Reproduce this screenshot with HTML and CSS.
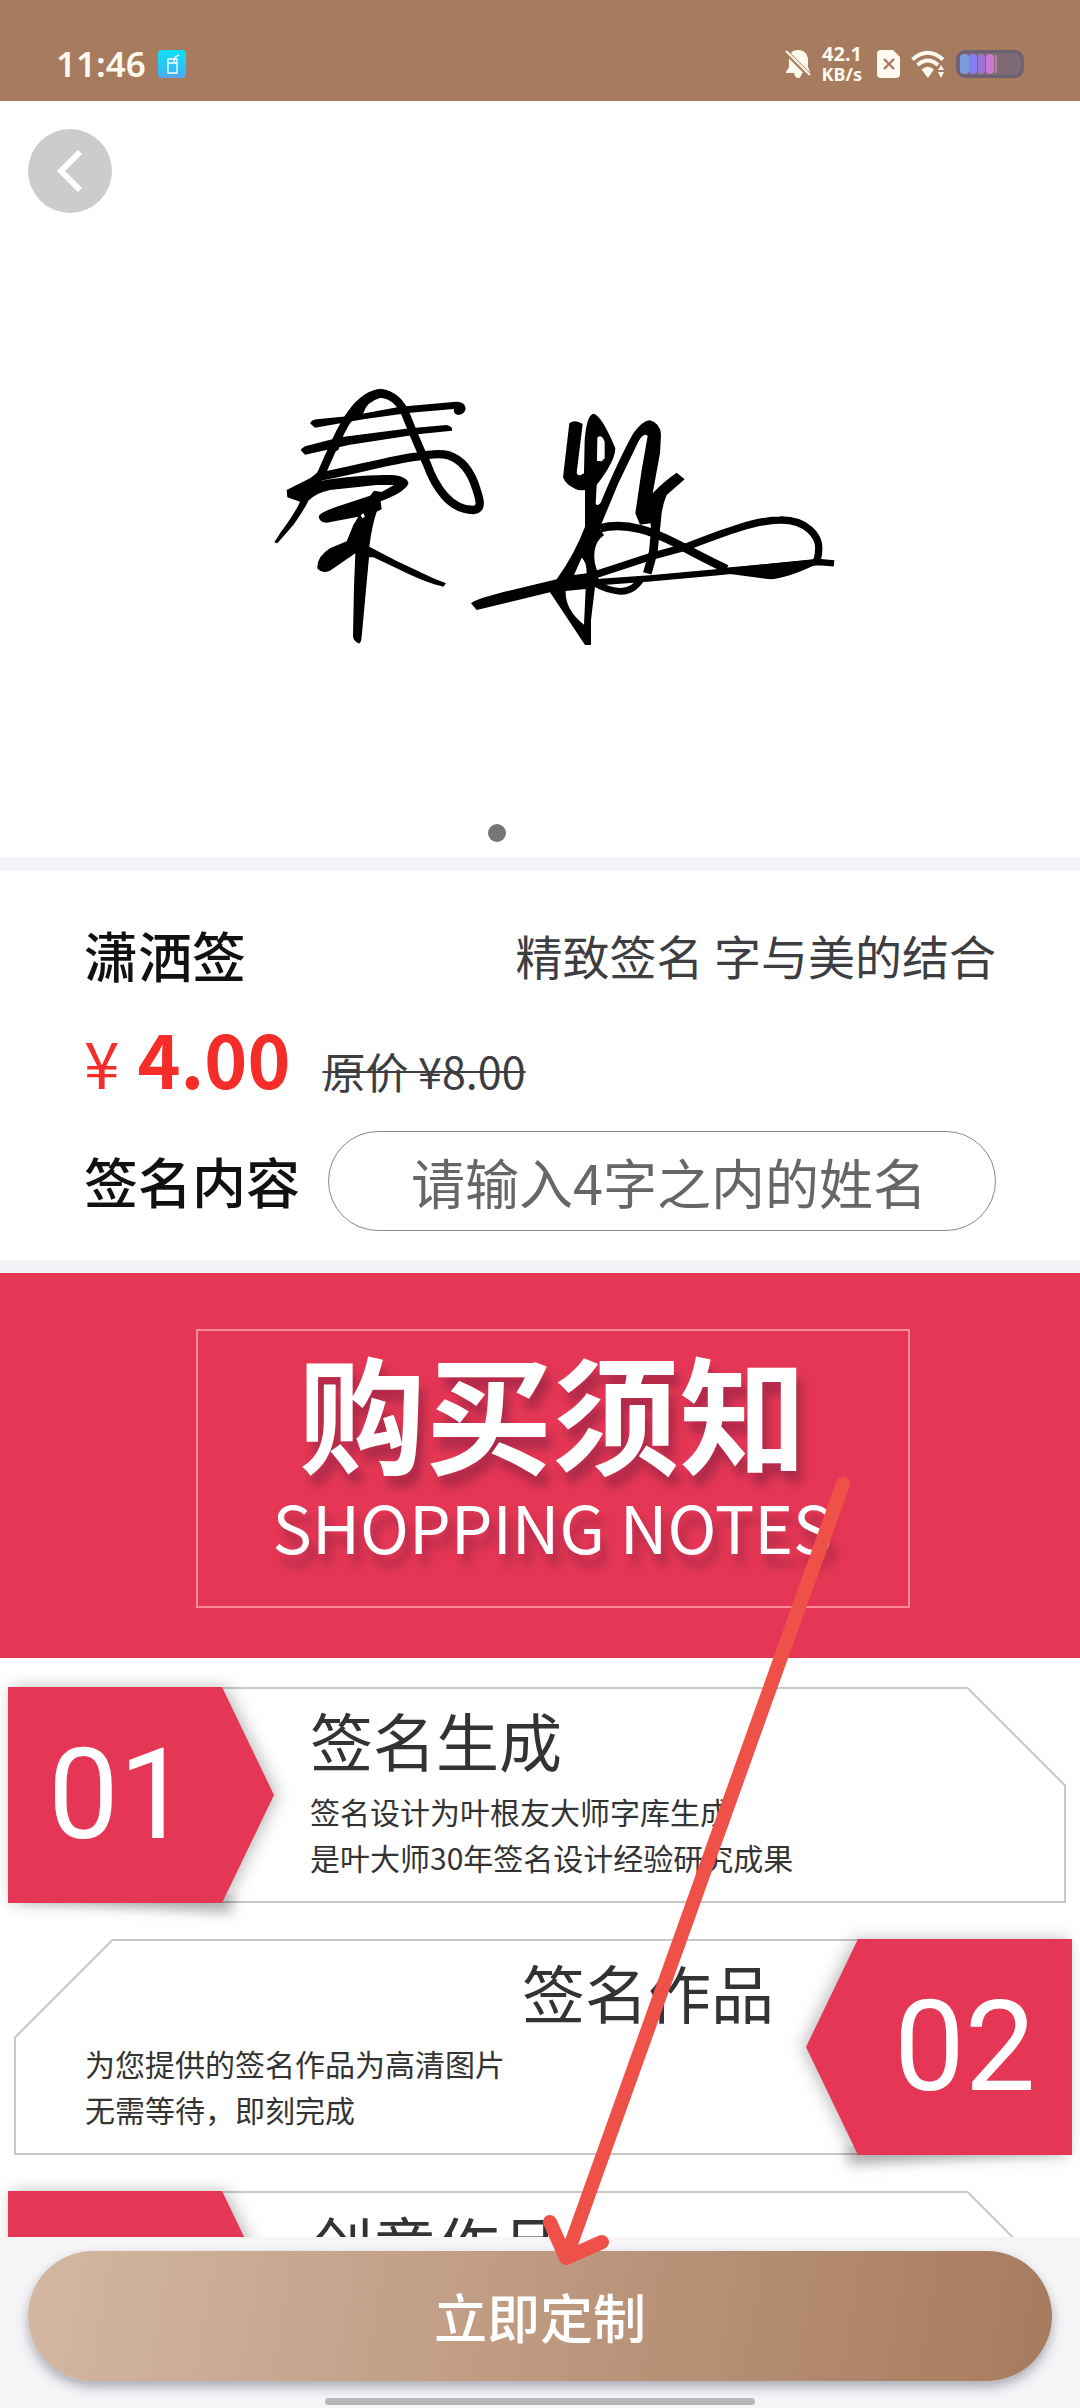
FILE: index.html
```html
<!DOCTYPE html>
<html lang="zh-CN">
<head>
    <meta charset="UTF-8">
    <meta name="viewport" content="width=device-width, initial-scale=1.0">
    <title>潇洒签</title>
    <link rel="stylesheet" href="styles.css">
</head>
<body>
    <header class="status-bar">
        <span class="time">11:46</span>
        <svg class="app-icon" width="28" height="28" viewBox="0 0 28 28">
            <defs>
                <linearGradient id="sky" x1="0" y1="0" x2="0" y2="1">
                    <stop offset="0" stop-color="#10e0fa"/>
                    <stop offset="1" stop-color="#3fb0f5"/>
                </linearGradient>
            </defs>
            <rect width="28" height="28" rx="4" fill="url(#sky)"/>
            <path d="M0 24q7 3 14 1t14-1q0 4-4 4H4q-4 0-4-4z" fill="#58a8ee"/>
            <path d="M10 9h9v14h-9zM10 13h9M16 12l1-5 4-2" fill="none" stroke="#fff" stroke-width="1.3"/>
        </svg>
        <div class="status-icons">
            <svg width="26" height="28" viewBox="0 0 26 28">
                <path d="M13 0C7 0 4 4 4 10v7l-3 5v1h8q1 5 4 5t4-5h8v-1l-2-5v-7C23 4 19 0 13 0z" fill="#fffaf0"/>
                <path d="M-1 0l27 27" stroke="#a77b5d" stroke-width="5"/>
                <path d="M1 1l24 24" stroke="#fffaf0" stroke-width="2"/>
            </svg>
            <div class="speed"><span>42.1</span><span class="unit">KB/s</span></div>
            <svg width="23" height="28" viewBox="0 0 23 28">
                <path d="M4 0h12l7 7v17q0 4-4 4H4q-4 0-4-4V4q0-4 4-4z" fill="#fffaf0"/>
                <path d="M7 9l10 10M17 9L7 19" stroke="#a77b5d" stroke-width="2.4"/>
            </svg>
            <svg class="wifi" width="34" height="28" viewBox="0 0 34 28">
                <g fill="none" stroke="#fffaf0" stroke-width="4">
                    <path d="M1.500 9.500Q16.500-4 32 9.500"/>
                    <path d="M6.500 15Q16.500 6 27 15"/>
                </g>
                <path d="M10.500 19.500Q17 14 23 19.500L17 28zM27 20l3-5 3 5zM27 22h6l-3 6z" fill="#fffaf0"/>
            </svg>
            <svg width="68" height="28" viewBox="0 0 68 28">
                <rect x="1.500" y="1.500" width="65" height="25" rx="8" fill="#7d6a72" stroke="#6c6273" stroke-width="3"/>
                <rect x="4" y="4" width="9" height="20" rx="4" fill="#7c9bd8"/>
                <rect x="13" y="4" width="8" height="20" rx="4" fill="#8480f4"/>
                <rect x="22" y="4" width="7" height="20" rx="3" fill="#9c72d4"/>
                <rect x="30" y="4" width="8" height="20" rx="4" fill="#c87bd0"/>
                <rect x="39" y="5" width="2" height="18" fill="#c07a9c"/>
            </svg>
        </div>
    </header>

    <main class="content">
        <section class="preview">
            <button class="back" type="button" aria-label="返回">
                <svg width="28" height="44" viewBox="0 0 28 44"><path d="M24 3L5 22l19 19" fill="none" stroke="#fff" stroke-width="6"/></svg>
            </button>
            <svg class="signature" width="640" height="362" viewBox="-90 -216 1920 1086" role="img" aria-label="签名">
                <!-- 秦 -->
                <g>
                    <path d="M180 160Q185 150 200 148L300 138L450 110L610 96Q645 92 647 115Q645 133 625 135Q608 132 612 117L480 128L340 148L195 173Z"/>
                    <path d="M152 240Q160 228 180 225L270 202L480 175L590 165Q610 170 606 182L510 192L300 224L165 254Z"/>
                    <path d="M208 325C245 240 275 170 305 130C330 92 365 70 392 70C430 74 455 100 470 140C490 190 505 230 530 280C555 350 600 420 670 420C698 418 690 390 680 360C665 310 640 270 595 256C570 248 540 252 500 260C420 270 330 297 200 322" fill="none" stroke="#000" stroke-width="25"/>
                    <path d="M290 140Q340 62 392 56Q430 60 450 90L440 105Q420 82 390 84Q350 95 340 130L290 165L265 240L235 255Z"/>
                    <path d="M220 295L180 325L110 360L112 382L150 395Q135 430 90 490L73 517L82 520L130 465Q165 415 175 392Q200 368 240 360L380 345L432 345L395 366L372 362L360 377L260 410Q208 428 206 440Q208 456 230 458L325 440L310 465L290 514L240 535Q200 560 202 595Q215 612 240 602L316 550L312 650L309 795Q308 812 325 820Q333 822 335 800L357 562L370 562L440 595Q530 640 580 650L588 640L550 625L440 573L358 530Q365 470 380 425L395 418L392 394C430 380 465 362 475 342C476 330 462 320 435 316C370 312 280 322 215 332Z"/>
                    <path d="M332 436l8-6 5 10-8 5z" fill="#fff"/>
                </g>
                <!-- 牧 -->
                <g transform="translate(630 60)">
                    <path d="M328 100Q345 86 368 102L350 248Q352 258 362 255L372 250L374 150Q380 75 400 71Q425 75 466 175Q465 215 410 285L407 342Q413 350 422 338Q480 200 520 130Q550 90 570 91Q602 100 603 135L600 190L578 310Q610 275 650 248L674 268L620 315Q605 350 603 390L598 435L573 435L572 400L540 404L526 370L545 240L563 138Q552 125 535 155L475 280L425 400L400 470L375 470L375 300Q355 302 345 296Q318 285 309 262Z"/>
                    <path d="M375 410Q345 490 290 568L130 606Q40 630 33 640L50 660L270 607L375 765L393 765L393 690L405 590L425 588L405 540L395 480L425 405Z"/>
                    <g fill="none" stroke="#000" stroke-width="26">
                        <path d="M420 415Q475 400 540 417C620 437 700 492 800 537" stroke-width="25"/>
                        <path d="M410 553L570 500L680 470C760 440 880 390 960 390C1040 388 1080 440 1076 480Q1075 505 1068 515" stroke-width="22"/>
                        <path d="M290 582L420 576L570 565L760 548L1075 516L1122 520" stroke-width="19"/>
                        <path d="M588 400L580 485L562 550"/>
                        <path d="M405 580Q440 600 480 604Q520 606 545 565" stroke-width="20"/>
                        <path d="M425 425C385 450 380 510 405 560"/>
                    </g>
                    <path d="M780 535L1070 508L1065 525Q980 565 930 568L810 552Z"/>
                    <path d="M365 503L342 555L380 550Q380 515 365 503ZM317 603L377 597L372 704Q315 660 317 603ZM412 143Q424 130 434 155V205L425 214L411 213Z" fill="#fff"/>
                </g>
            </svg>
            <span class="dot"></span>
        </section>

        <section class="product">
            <div class="row">
                <h1>潇洒签</h1>
                <p class="slogan">精致签名 字与美的结合</p>
            </div>
            <div class="row prices">
                <span class="yen">¥</span>
                <strong class="price">4.00</strong>
                <del class="old-price">原价 ¥8.00</del>
            </div>
            <div class="row">
                <label for="name">签名内容</label>
                <input id="name" type="text" maxlength="4" placeholder="请输入4字之内的姓名">
            </div>
        </section>

        <section class="notes">
            <div class="banner">
                <div class="banner-frame">
                    <h2>购买须知</h2>
                    <p>SHOPPING NOTES</p>
                </div>
            </div>
            <article class="note">
                <div class="tag"><span>01</span></div>
                <div class="panel">
                    <h3>签名生成</h3>
                    <p>签名设计为叶根友大师字库生成<br>是叶大师30年签名设计经验研究成果</p>
                </div>
            </article>
            <article class="note reverse">
                <div class="tag"><span>02</span></div>
                <div class="panel">
                    <h3>签名作品</h3>
                    <p>为您提供的签名作品为高清图片<br>无需等待，即刻完成</p>
                </div>
            </article>
            <article class="note">
                <div class="tag"><span>03</span></div>
                <div class="panel">
                    <h3>创意作品</h3>
                </div>
            </article>
        </section>
    </main>

    <footer class="footer">
        <button class="order" type="button">立即定制</button>
        <div class="home-bar"></div>
        <svg class="arrow" width="320" height="800" viewBox="0 0 320 800">
            <path d="M303 12L26 786M10 750L26 786L62 770" fill="none" stroke="#ef5148" stroke-width="14" stroke-linecap="round" stroke-linejoin="round"/>
        </svg>
    </footer>
</body>
</html>
```
FILE: styles.css
```css
* {
    box-sizing: border-box;
    margin: 0;
    padding: 0;
}
body {
    height: 100vh;
    display: flex;
    flex-direction: column;
    overflow: hidden;
    font-family: "Noto Sans CJK SC", "Noto Sans", sans-serif;
    background: #f4f4f8;
    color: #111;
}
button, input {
    font-family: inherit;
}

.status-bar {
    flex: none;
    display: flex;
    align-items: center;
    padding: 39px 56px 12px;
    height: 101px;
    background: #a77b5d;
    color: #fffaf0;
}
.time {
    font-family: "Noto Sans", sans-serif;
    font-size: 35px;
    font-weight: 600;
    line-height: 48px;
}
.app-icon {
    margin-left: 12px;
}
.status-icons {
    display: flex;
    align-items: center;
    gap: 11px;
    margin-left: auto;
}
.speed {
    display: flex;
    flex-direction: column;
    align-items: flex-end;
    margin-right: 4px;
    font-family: "Noto Sans", sans-serif;
    font-size: 20px;
    font-weight: 700;
    line-height: 20px;
}
.unit {
    font-size: 18px;
}

.content {
    flex: 1;
    min-height: 0;
    overflow-y: auto;
    scrollbar-width: none;
}
.preview {
    position: relative;
    display: flex;
    align-items: center;
    justify-content: center;
    height: 756px;
    background: #fff;
}
.back {
    position: absolute;
    top: 28px;
    left: 28px;
    width: 84px;
    height: 84px;
    border: none;
    border-radius: 50%;
    background: #cdcbce;
}
.back svg {
    display: block;
    margin: 0 auto;
}
.dot {
    position: absolute;
    bottom: 15px;
    left: 46%;
    width: 18px;
    height: 18px;
    margin-left: -9px;
    border-radius: 50%;
    background: #757575;
}

.product {
    display: flex;
    flex-direction: column;
    gap: 18px;
    margin: 14px 0 13px;
    padding: 44px 84px 29px;
    background: #fff;
}
.row {
    display: flex;
    align-items: center;
    justify-content: space-between;
}
h1, label {
    font-size: 54px;
    font-weight: 500;
    line-height: 80px;
}
.slogan {
    font-size: 47px;
    line-height: 80px;
    color: #3d3d42;
}
.prices {
    align-items: baseline;
    justify-content: flex-start;
    height: 100px;
    line-height: 88px;
    color: #f52d28;
}
.yen {
    font-size: 64px;
}
.price {
    margin-left: 18px;
    font-size: 73px;
}
.old-price {
    margin-left: 32px;
    font-size: 43px;
    color: #3d3d42;
    text-decoration-thickness: 2px;
}
input {
    flex: 1;
    min-width: 0;
    margin-left: 28px;
    height: 100px;
    padding: 0 40px 0 82px;
    border: 1px solid #888;
    border-radius: 50px;
    background: #fff;
    font-size: 54px;
    color: #111;
}
input::placeholder {
    color: #666;
    opacity: 1;
}

.notes {
    background: #fff;
}
.banner {
    display: flex;
    justify-content: center;
    padding: 56px 0 50px 25px;
    margin-bottom: 29px;
    background: #e53755;
}
.banner-frame {
    width: 714px;
    height: 279px;
    padding-top: 4px;
    border: 2px solid #f98a98;
    color: #fff;
    text-align: center;
    text-shadow: 6px 12px 10px rgba(120, 30, 60, 0.5);
}
.banner h2 {
    font-size: 127px;
    font-weight: 700;
    line-height: 150px;
}
.banner p {
    margin-top: 2px;
    font-size: 66px;
    line-height: 76px;
}
.note {
    display: flex;
    margin: 0 14px 36px 8px;
}
.note.reverse {
    flex-direction: row-reverse;
    margin: 0 8px 36px 14px;
}
.tag {
    position: relative;
    z-index: 1;
    flex: none;
    width: 266px;
    filter: drop-shadow(4px 0 8px rgba(0, 0, 0, 0.25));
}
.tag::before {
    content: "";
    position: absolute;
    z-index: -1;
    left: 16px;
    bottom: 16px;
    width: 210px;
    height: 20px;
    box-shadow: 0 20px 12px rgba(0, 0, 0, 0.2);
    transform: rotate(4deg);
}
.tag span {
    display: block;
    height: 216px;
    padding-left: 40px;
    background: #e53755;
    clip-path: polygon(0 0, 214px 0, 100% 50%, 214px 100%, 0 100%);
    color: #fff;
    font-family: Roboto, sans-serif;
    font-size: 126px;
    line-height: 216px;
}
.reverse .tag {
    filter: drop-shadow(-4px 0 8px rgba(0, 0, 0, 0.25));
}
.reverse .tag::before {
    left: auto;
    right: 16px;
    transform: rotate(-4deg);
}
.reverse .tag span {
    padding-left: 88px;
    clip-path: polygon(52px 0, 100% 0, 100% 100%, 52px 100%, 0 50%);
}
.panel {
    position: relative;
    flex: 1;
    min-height: 216px;
    margin-left: -60px;
    padding: 20px 0 20px 96px;
    background: #c8c8c8;
    clip-path: polygon(0 0, calc(100% - 98px) 0, 100% 98px, 100% 100%, 0 100%);
    color: #333;
}
.panel::before {
    content: "";
    position: absolute;
    inset: 2px;
    background: #fff;
    clip-path: polygon(0 0, calc(100% - 97px) 0, 100% 97px, 100% 100%, 0 100%);
}
.reverse .panel {
    margin: 0 -60px 0 0;
    padding: 20px 92px 20px 71px;
    clip-path: polygon(98px 0, 100% 0, 100% 100%, 0 100%, 0 98px);
}
.reverse .panel::before {
    clip-path: polygon(97px 0, 100% 0, 100% 100%, 0 100%, 0 97px);
}
.panel h3 {
    position: relative;
    margin-bottom: 17px;
    font-size: 63px;
    font-weight: 400;
    line-height: 64px;
}
.reverse h3 {
    text-align: right;
}
.panel p {
    position: relative;
    font-size: 30px;
    line-height: 46px;
}

.footer {
    position: relative;
    z-index: 2;
    flex: none;
    padding: 14px 28px 3px;
    background: #f5f5f8;
}
.order {
    display: block;
    width: 100%;
    height: 130px;
    border: none;
    border-radius: 65px;
    background: linear-gradient(100deg, #d4b7a2, #a77b5d);
    box-shadow: 0 6px 12px rgba(60, 60, 80, 0.4);
    color: #fff;
    font-size: 53px;
    font-weight: 500;
}
.home-bar {
    width: 42%;
    height: 7px;
    margin: 17px auto 0;
    border-radius: 4px;
    background: #b5b7b9;
}
.arrow {
    position: absolute;
    left: 50%;
    bottom: 136px;
    pointer-events: none;
}
```
